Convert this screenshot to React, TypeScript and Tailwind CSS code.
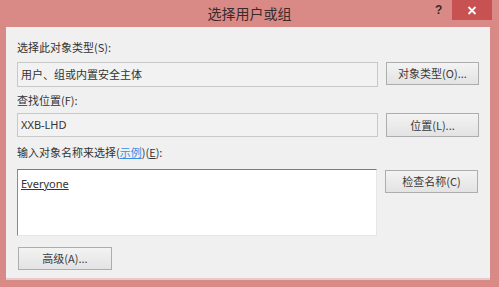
import React from "react";

const cjk = { fontFamily: '"Noto Sans CJK SC", "Noto Sans", sans-serif' };

function Btn({ label, className = "" }: { label: string; className?: string }) {
  return (
    <div
      className={`flex items-center justify-center border border-[#adadad] bg-gradient-to-b from-[#f3f3f3] to-[#e3e3e3] text-[11px] text-[#3a3a3a] leading-none ${className}`}
      style={cjk}
    >
      {label}
    </div>
  );
}

export default function App() {
  return (
    <div className="w-[499px] h-[287px] bg-[#d98a86] flex flex-col overflow-hidden" style={cjk}>
      <div className="relative h-[27px] flex items-center justify-center shrink-0">
        <span className="text-[14px] text-[#3a2a2a] leading-none -mt-[1px]">选择用户或组</span>
        <span className="absolute left-[435px] top-[4px] text-[12px] font-bold text-[#3a2a2a] leading-none" style={{ fontFamily: '"Liberation Sans", sans-serif' }}>?</span>
        <div className="absolute left-[452px] top-0 w-[40px] h-[20px] bg-[#c85252] flex items-center justify-center">
          <svg width="10" height="9" viewBox="0 0 10 9">
            <path d="M1.5 1 L8.5 8 M8.5 1 L1.5 8" stroke="#ffffff" strokeWidth="1.8" />
          </svg>
        </div>
      </div>
      <div className="ml-[6px] mr-[9px] mb-[7px] flex-1 bg-[#f0f0f0] border-b-[2px] border-[#e8c9c7] flex flex-col px-[11px]">
        <div className="mt-[13px] h-[15px] leading-[15px] text-[11px] text-[#333]">选择此对象类型(S):</div>
        <div className="mt-[7px] flex items-start gap-[8px]">
          <div className="w-[361px] h-[25px] border border-[#c8c8c8] bg-[#f2f2f2] flex items-center pl-[3px] text-[11px] text-[#333]">用户、组或内置安全主体</div>
          <Btn label="对象类型(O)..." className="w-[93px] h-[23px]" />
        </div>
        <div className="mt-[6px] h-[15px] leading-[15px] text-[11px] text-[#333]">查找位置(F):</div>
        <div className="mt-[5px] flex items-start gap-[8px]">
          <div className="w-[361px] h-[24px] border border-[#c8c8c8] bg-[#f2f2f2] flex items-center pl-[3px] text-[11px] text-[#333]" style={{ fontFamily: '"Noto Sans", sans-serif' }}>XXB-LHD</div>
          <Btn label="位置(L)..." className="w-[93px] h-[24px]" />
        </div>
        <div className="mt-[8px] h-[15px] leading-[15px] text-[11px] text-[#333]">
          输入对象名称来选择(<span className="text-[#3a8ee6] underline">示例</span>)(<span className="underline">E</span>):
        </div>
        <div className="mt-[9px] flex items-start gap-[8px]">
          <div className="w-[360px] h-[67px] bg-white border-t border-l border-t-[#7a7a7a] border-l-[#8a8a8a] border-r border-b border-r-[#e6e6e6] border-b-[#e6e6e6] pl-[3px] pt-[6px] text-[11px] leading-[15px]">
            <span className="text-[#333] underline" style={{ fontFamily: '"Noto Sans", sans-serif' }}>Everyone</span>
          </div>
          <Btn label="检查名称(C)" className="w-[93px] h-[23px] mt-[1px]" />
        </div>
        <div className="mt-[11px] pl-[1px]">
          <Btn label="高级(A)..." className="w-[94px] h-[23px]" />
        </div>
      </div>
    </div>
  );
}
